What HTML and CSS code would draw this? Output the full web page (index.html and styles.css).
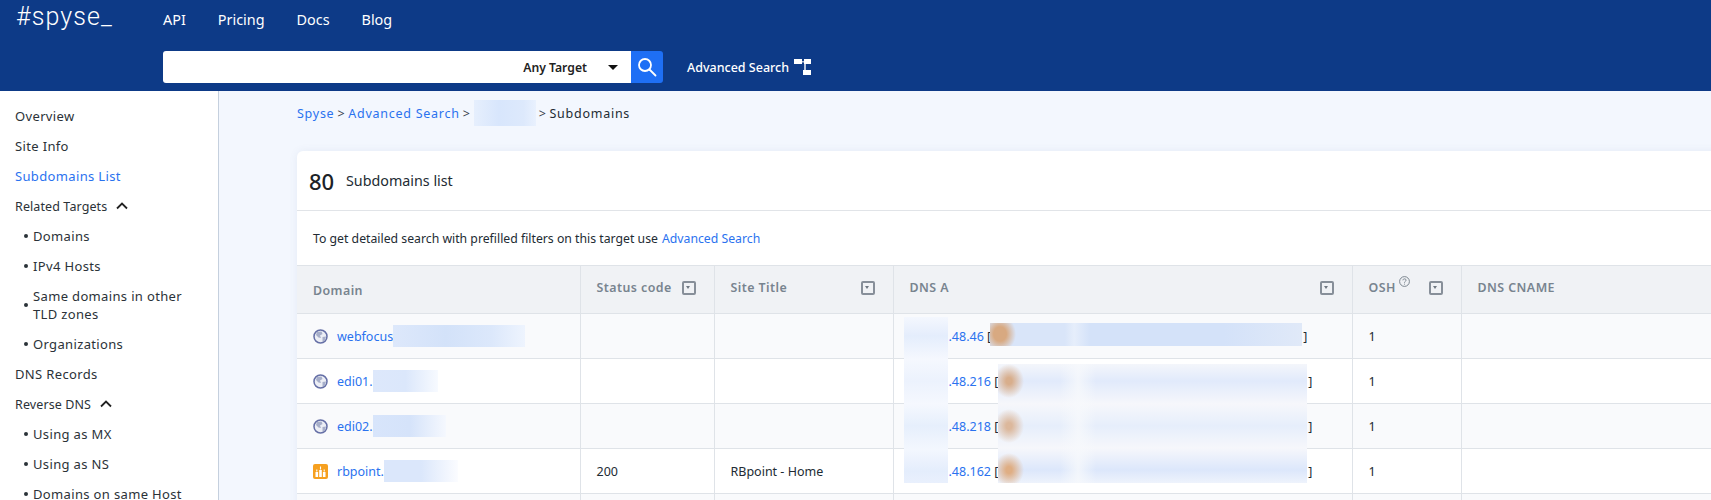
FILE: index.html
```html
<!DOCTYPE html>
<html lang="en">
<head>
  <meta charset="UTF-8">
  <meta name="viewport" content="width=device-width, initial-scale=1.0">
  <title>Subdomains list</title>
  <link rel="stylesheet" href="styles.css">
</head>
<body>

  <header class="topbar">
    <div class="topbar-row">
      <a class="logo" href="#">#spyse_</a>
      <nav class="topnav">
        <a href="#">API</a>
        <a href="#">Pricing</a>
        <a href="#">Docs</a>
        <a href="#">Blog</a>
      </nav>
    </div>
    <div class="searchbar">
      <div class="searchbox">
        <span class="target">Any Target</span>
        <span class="caret"></span>
      </div>
      <button class="searchbtn" type="button" aria-label="Search">
        <svg width="20" height="20" viewBox="0 0 20 20" fill="none" stroke="#fff" stroke-width="1.8">
          <circle cx="8" cy="8" r="6"/>
          <path d="M12.5 12.5 L18.5 18.5" stroke-linecap="round"/>
        </svg>
      </button>
      <a class="adv-link" href="#">Advanced Search
        <svg width="17" height="16" viewBox="0 0 17 16" fill="#fff">
          <path d="M0 0h8v5H0zM10 0h7v5h-7zM9 11h8v5H9z"/>
          <path d="M10 5h2v6h-2zM8 2h2v1.5H8z" opacity="0.7"/>
        </svg>
      </a>
    </div>
  </header>

  <div class="layout">
    <aside class="sidebar">
      <a class="side-item" href="#">Overview</a>
      <a class="side-item" href="#">Site Info</a>
      <a class="side-item active" href="#">Subdomains List</a>
      <a class="side-item side-group" href="#">Related Targets
        <svg class="chevron" width="12" height="8" viewBox="0 0 12 8" fill="none" stroke="#222" stroke-width="1.8"><path d="M1 6.5 L6 1.5 L11 6.5"/></svg>
      </a>
      <ul class="side-sub">
        <li>Domains</li>
        <li>IPv4 Hosts</li>
        <li>Same domains in other TLD zones</li>
        <li>Organizations</li>
      </ul>
      <a class="side-item" href="#">DNS Records</a>
      <a class="side-item side-group" href="#">Reverse DNS
        <svg class="chevron" width="12" height="8" viewBox="0 0 12 8" fill="none" stroke="#222" stroke-width="1.8"><path d="M1 6.5 L6 1.5 L11 6.5"/></svg>
      </a>
      <ul class="side-sub">
        <li>Using as MX</li>
        <li>Using as NS</li>
        <li>Domains on same Host</li>
      </ul>
    </aside>

    <main class="content">
      <div class="crumbs">
        <a href="#">Spyse</a> &gt; <a href="#">Advanced Search</a> &gt;
        <span class="crumb-mask"></span>
        &gt; <span class="crumb-current">Subdomains</span>
      </div>

      <section class="card">
        <div class="card-title">
          <span class="count">80</span>
          <span class="card-name">Subdomains list</span>
        </div>
        <p class="card-note">To get detailed search with prefilled filters on this target use <a href="#">Advanced Search</a></p>

        <div class="table-wrap">
          <table class="grid">
            <colgroup>
              <col class="col-domain">
              <col class="col-status">
              <col class="col-title">
              <col class="col-dns">
              <col class="col-osh">
              <col>
            </colgroup>
            <thead>
              <tr>
                <th><span class="th-low">Domain</span></th>
                <th><div class="th-in">Status code <span class="filter"></span></div></th>
                <th><div class="th-in">Site Title <span class="filter"></span></div></th>
                <th><div class="th-in">DNS A <span class="filter"></span></div></th>
                <th>
                  <div class="th-in">
                    <span>OSH
                      <svg class="help" width="11" height="11" viewBox="0 0 11 11" fill="none" stroke="#6f7a85" stroke-width="0.9">
                        <circle cx="5.5" cy="5.5" r="4.9"/>
                        <path d="M3.9 4.3 C3.9 2.4 7.1 2.4 7.1 4.2 C7.1 5.3 5.5 5.3 5.5 6.7 M5.5 7.7 V8.6"/>
                      </svg>
                    </span>
                    <span class="filter"></span>
                  </div>
                </th>
                <th><span class="th-in">DNS CNAME</span></th>
              </tr>
            </thead>
            <tbody>
              <tr>
                <td><div class="domain"><svg class="fav"><use href="#globe"/></svg><a href="#">webfocus</a><span class="mask mask-a"></span></div></td>
                <td></td>
                <td></td>
                <td><span class="ip-gap"></span><a href="#">.48.46</a> [<span class="dns-gap-a"></span>]</td>
                <td>1</td>
                <td></td>
              </tr>
              <tr>
                <td><div class="domain"><svg class="fav"><use href="#globe"/></svg><a href="#">edi01.</a><span class="mask mask-b"></span></div></td>
                <td></td>
                <td></td>
                <td><span class="ip-gap"></span><a href="#">.48.216</a> [<span class="dns-gap-b"></span>]</td>
                <td>1</td>
                <td></td>
              </tr>
              <tr>
                <td><div class="domain"><svg class="fav"><use href="#globe"/></svg><a href="#">edi02.</a><span class="mask mask-c"></span></div></td>
                <td></td>
                <td></td>
                <td><span class="ip-gap"></span><a href="#">.48.218</a> [<span class="dns-gap-b"></span>]</td>
                <td>1</td>
                <td></td>
              </tr>
              <tr>
                <td>
                  <div class="domain">
                    <svg class="fav" viewBox="0 0 15 15">
                      <rect width="15" height="15" rx="2" fill="#f6a01f"/>
                      <path d="M2.5 8h2.6v5H2.5zM6.2 6h2.6v7H6.2zM9.9 8h2.6v5H9.9z" fill="#fff"/>
                      <path d="M3.8 5.5v2M7.5 2.5v3M11.2 5.5v2" stroke="#fff" stroke-width="1.1"/>
                    </svg>
                    <a href="#">rbpoint.</a><span class="mask mask-d"></span>
                  </div>
                </td>
                <td>200</td>
                <td>RBpoint - Home</td>
                <td><span class="ip-gap"></span><a href="#">.48.162</a> [<span class="dns-gap-b"></span>]</td>
                <td>1</td>
                <td></td>
              </tr>
              <tr>
                <td></td><td></td><td></td><td></td><td></td><td></td>
              </tr>
            </tbody>
          </table>
          <!-- blurred bits that run over the row lines -->
          <div class="blur-ip"></div>
          <div class="blur-host-one"></div>
          <div class="blur-host-many"></div>
        </div>
      </section>
    </main>
  </div>

  <svg class="defs" width="0" height="0">
    <symbol id="globe" viewBox="0 0 15 15">
      <circle cx="7.5" cy="7.5" r="6.5" fill="#eceef5" stroke="#656fa6" stroke-width="1.5"/>
      <path d="M4 3 L8.5 2.5 L9.5 5 L7 6.5 L8 9 L5.5 8.5 L3 6 Z M9.5 8 L13 7.5 L12 11 L9.5 13 Z" fill="#a7afca"/>
    </symbol>
  </svg>

</body>
</html>
```

FILE: styles.css
```css
* {
  box-sizing: border-box;
}
html, body {
  height: 500px;
  overflow: hidden;
}
body {
  margin: 0;
  font-family: "Noto Sans", Arial, sans-serif;
  font-size: 13px;
  color: #222b33;
  background: #f3f7fe;
}
a {
  color: #2a72ef;
  text-decoration: none;
}

/* top bar */
.topbar {
  height: 91px;
  background: #0d3a87;
  color: #fff;
}
.topbar-row {
  display: flex;
  align-items: center;
  height: 41px;
  padding-left: 16px;
}
.logo {
  width: 147px;
  margin-top: -8px;
  color: #fff;
  font-family: Roboto, sans-serif;
  font-weight: 300;
  font-size: 25px;
  letter-spacing: 1.1px;
}
.topnav {
  display: flex;
  gap: 32px;
  margin-top: -3px;
}
.topnav a {
  color: #fff;
  font-size: 14.4px;
}
.searchbar {
  display: flex;
  align-items: center;
  margin: 10px 0 0 163px;
}
.searchbox {
  display: flex;
  align-items: center;
  justify-content: flex-end;
  width: 468px;
  height: 32px;
  padding-right: 13px;
  background: #fff;
  border-radius: 3px 0 0 3px;
}
.target {
  margin-right: 21px;
  font-weight: 600;
  font-size: 12.2px;
  color: #222;
}
.caret {
  width: 0;
  height: 0;
  border-left: 5px solid transparent;
  border-right: 5px solid transparent;
  border-top: 5px solid #111;
}
.searchbtn {
  display: flex;
  align-items: center;
  justify-content: center;
  width: 32px;
  height: 32px;
  padding: 0;
  background: #1e6ff5;
  border: none;
  border-radius: 0 3px 3px 0;
}
.adv-link {
  display: flex;
  align-items: center;
  gap: 5px;
  margin-left: 24px;
  color: #fff;
  font-weight: 500;
  font-size: 12.5px;
}

/* page body */
.layout {
  display: flex;
  height: 409px;
}
.sidebar {
  flex: 0 0 219px;
  padding-top: 10px;
  padding-left: 15px;
  background: #fff;
  border-right: 1px solid #c5d0de;
}
.side-item {
  display: flex;
  align-items: center;
  height: 30px;
  color: #2b3238;
  letter-spacing: 0.35px;
}
.side-item.active {
  color: #2a72ef;
}
.side-group {
  font-size: 12.5px;
  letter-spacing: 0.1px;
}
.chevron {
  margin-left: 9px;
}
.side-sub {
  margin: 0;
  padding: 0 0 0 18px;
  list-style: none;
}
.side-sub li {
  position: relative;
  width: 165px;
  padding: 6px 0;
  line-height: 18px;
  color: #2b3238;
  letter-spacing: 0.35px;
}
.side-sub li::before {
  content: "";
  position: absolute;
  left: -9px;
  top: 50%;
  width: 4px;
  height: 4px;
  margin-top: -2px;
  border-radius: 50%;
  background: #2b3238;
}

.content {
  flex: 1;
  padding: 0 0 0 78px;
  min-width: 0;
}
.crumbs {
  display: flex;
  align-items: center;
  gap: 3px;
  height: 60px;
  padding-bottom: 16px;
  font-size: 12.5px;
  letter-spacing: 0.74px;
  color: #38424c;
}
.crumb-mask {
  width: 62px;
  height: 26px;
  background: linear-gradient(90deg, #e6effd, #d8e6fc 40%, #dde9fc 80%, #e9f1fe);
}
.crumb-current {
  color: #222b33;
}

.card {
  width: 1500px;
  background: #fff;
  border-radius: 6px 0 0 0;
  box-shadow: 0 0 8px rgba(60, 90, 140, 0.08);
}
.card-title {
  display: flex;
  align-items: center;
  height: 60px;
  padding-left: 12px;
  border-bottom: 1px solid #e1e4e8;
}
.count {
  width: 37px;
  font-size: 22px;
  font-weight: 500;
  color: #1c2227;
}
.card-name {
  font-size: 14.3px;
  color: #222b33;
}
.card-note {
  display: flex;
  align-items: center;
  gap: 4px;
  height: 54px;
  margin: 0;
  padding-left: 16px;
  font-size: 12.25px;
  color: #222b33;
}

.table-wrap {
  position: relative;
}
.grid {
  width: 100%;
  border-collapse: collapse;
  table-layout: fixed;
}
.col-domain { width: 283px; }
.col-status { width: 134px; }
.col-title { width: 179px; }
.col-dns { width: 459px; }
.col-osh { width: 109px; }

.grid th, .grid td {
  padding: 0 16px;
  border: 1px solid #dfe3e8;
  border-left-color: #e3e7ec;
  text-align: left;
  white-space: nowrap;
}
.grid th {
  height: 48px;
  background: #f0f2f5;
  color: #78848f;
  font-size: 12.4px;
  font-weight: 600;
  letter-spacing: 0.45px;
}
.grid td {
  height: 45px;
  font-size: 12.5px;
}
.grid tbody tr:nth-child(odd) td {
  background: #f9fafc;
}
.grid th:first-child, .grid td:first-child {
  border-left: none;
}
.th-low {
  display: block;
  padding-top: 2px;
}
.th-in {
  display: flex;
  align-items: center;
  justify-content: space-between;
  margin-top: -4px;
  padding-right: 2px;
}
.filter {
  position: relative;
  flex: none;
  width: 14px;
  height: 14px;
  border: 2px solid #878f99;
  border-radius: 2px;
}
.filter::after {
  content: "";
  position: absolute;
  left: 2.5px;
  top: 3.5px;
  border-left: 2.5px solid transparent;
  border-right: 2.5px solid transparent;
  border-top: 3px solid #6f7882;
}
.help {
  position: relative;
  top: -5px;
}

.domain {
  display: flex;
  align-items: center;
}
.fav {
  flex: none;
  width: 15px;
  height: 15px;
  margin-right: 9px;
}
.mask {
  height: 22px;
  background: linear-gradient(90deg, #dde8fb, #d3e2f9 40%, #dce8fb 75%, #eef4fe);
}
.mask-a { width: 132px; }
.mask-b { width: 65px; background: linear-gradient(90deg, #dde8fb, #dbe7fb 50%, #f7faff); }
.mask-c { width: 73px; background: linear-gradient(90deg, #d8e5fb, #d5e3fa 50%, #f5f8fe); }
.mask-d { width: 74px; background: linear-gradient(90deg, #dbe7fb, #dbe7fb 50%, #fbfcff); }
.ip-gap {
  display: inline-block;
  width: 39px;
}
.dns-gap-a {
  display: inline-block;
  width: 312px;
}
.dns-gap-b {
  display: inline-block;
  width: 310px;
}

.blur-ip {
  position: absolute;
  left: 607px;
  top: 52px;
  width: 44px;
  height: 166px;
  background: linear-gradient(180deg, #f4f7fe 0, #e4edfc 19px, #f5f8fe 42px, #ecf2fd 64px, #f5f8fe 87px, #e6effc 109px, #f3f7fe 132px, #e4edfc 154px, #e9f0fd 166px);
}
.blur-host-one {
  position: absolute;
  left: 693px;
  top: 58px;
  width: 312px;
  height: 23px;
  background:
    radial-gradient(ellipse 16px 18px at 10px 11px, #d8a981 40%, transparent),
    linear-gradient(90deg, #d9e5f9 0, #d9e5f9 24%, #e6eefb 27%, #d4e2f9 32%, #d4e2f9 75%, #e0e9f8 100%);
}
.blur-host-many {
  position: absolute;
  left: 701px;
  top: 99px;
  width: 309px;
  height: 119px;
  background:
    radial-gradient(ellipse 15px 17px at 11px 17px, #d8ae8c 20%, transparent),
    radial-gradient(ellipse 15px 17px at 11px 62px, #dcb89c 20%, transparent),
    radial-gradient(ellipse 15px 17px at 11px 106px, #dfae84 20%, transparent),
    linear-gradient(90deg, transparent, rgba(247, 249, 252, 0.8), transparent) 62px 0 / 36px 100% no-repeat,
    linear-gradient(180deg, #f4f6fb 0, #e1eafb 17px, #f6f7fb 40px, #e6eefb 62px, #f6f7fb 84px, #dce7fb 106px, #eef3fc 119px);
}
.defs {
  position: absolute;
}
```
